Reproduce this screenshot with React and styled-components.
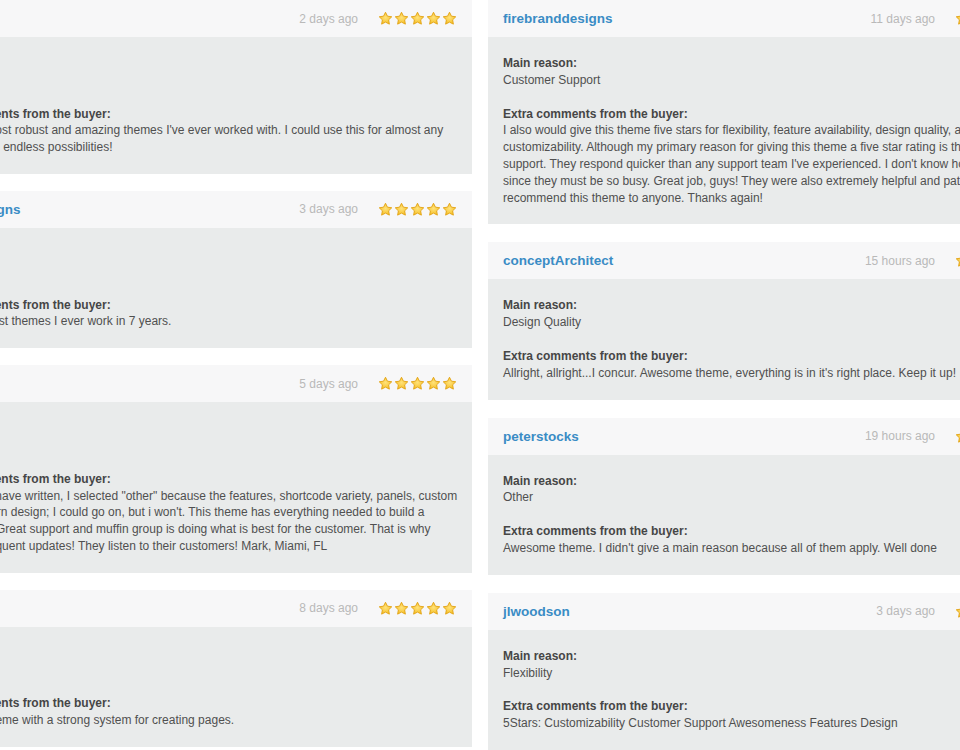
import React from "react";
import styled, { createGlobalStyle } from "styled-components";

const GlobalStyle = createGlobalStyle`
  html, body {
    margin: 0;
    padding: 0;
    background: #ffffff;
    overflow: hidden;
  }
  body {
    font-family: "Liberation Sans", Arial, sans-serif;
  }
`;

const Board = styled.div`
  display: flex;
  align-items: flex-start;
  gap: 16px;
  margin-left: -89px;
  width: 1138px;
`;

const Column = styled.div`
  display: flex;
  flex-direction: column;
  gap: ${(p) => p.$gap}px;
  width: 561px;
  flex: none;
`;

const Card = styled.div`
  display: flex;
  flex-direction: column;
`;

const CardHeader = styled.div`
  display: flex;
  align-items: center;
  height: 37px;
  padding: 0 15px 0 15px;
  background: #f7f7f8;
`;

const Username = styled.a`
  flex: 1;
  font-size: 13.5px;
  font-weight: bold;
  color: #3a8cc5;
  text-decoration: none;
  white-space: nowrap;
`;

const PostedAt = styled.span`
  font-size: 12px;
  color: #b9b9b9;
  margin-right: 20px;
  white-space: nowrap;
`;

const Stars = styled.div`
  display: flex;
  gap: 1px;
`;

const CardBody = styled.div`
  padding: 18px 15px 18px;
  background: #e9ebeb;
  font-size: 12px;
  line-height: 16.8px;
  color: #505050;
`;

const Section = styled.div`
  & + & {
    margin-top: 17px;
  }
`;

const Label = styled.div`
  font-weight: bold;
  color: #464646;
`;

const Line = styled.div`
  white-space: nowrap;
`;

const Star = () => (
  <svg width="15" height="15" viewBox="0 0 24 24">
    <defs>
      <radialGradient id="starFill" cx="50%" cy="45%" r="60%">
        <stop offset="0%" stopColor="#ffe27a" />
        <stop offset="100%" stopColor="#f5bd1f" />
      </radialGradient>
    </defs>
    <path
      d="M12 2l3.09 6.26L22 9.27l-5 4.87 1.18 6.88L12 17.77l-6.18 3.25L7 14.14 2 9.27l6.91-1.01L12 2z"
      fill="url(#starFill)"
      stroke="#e2a316"
      strokeWidth="1.5"
      strokeLinejoin="round"
    />
  </svg>
);

const leftReviews = [
  {
    user: "kdinko",
    when: "2 days ago",
    reason: "Flexibility",
    comment: [
      "One of the most robust and amazing themes I've ever worked with. I could use this for almost any",
      "agency. It has endless possibilities!",
    ],
  },
  {
    user: "kreativdesigns",
    when: "3 days ago",
    reason: "Features",
    comment: ["One of the best themes I ever work in 7 years."],
  },
  {
    user: "markmia",
    when: "5 days ago",
    reason: "Other",
    comment: [
      'As all others have written, I selected "other" because the features, shortcode variety, panels, custom',
      "fonts & modern design; I could go on, but i won't. This theme has everything needed to build a",
      "fine website. Great support and muffin group is doing what is best for the customer. That is why",
      "they have frequent updates! They listen to their customers! Mark, Miami, FL",
    ],
  },
  {
    user: "ozzy",
    when: "8 days ago",
    reason: "Flexibility",
    comment: ["A powerful theme with a strong system for creating pages."],
  },
];

const rightReviews = [
  {
    user: "firebranddesigns",
    when: "11 days ago",
    reason: "Customer Support",
    comment: [
      "I also would give this theme five stars for flexibility, feature availability, design quality, and",
      "customizability. Although my primary reason for giving this theme a five star rating is the",
      "support. They respond quicker than any support team I've experienced. I don't know how",
      "since they must be so busy. Great job, guys! They were also extremely helpful and patient.",
      "recommend this theme to anyone. Thanks again!",
    ],
  },
  {
    user: "conceptArchitect",
    when: "15 hours ago",
    reason: "Design Quality",
    comment: [
      "Allright, allright...I concur. Awesome theme, everything is in it's right place. Keep it up!",
    ],
  },
  {
    user: "peterstocks",
    when: "19 hours ago",
    reason: "Other",
    comment: [
      "Awesome theme. I didn't give a main reason because all of them apply. Well done",
    ],
  },
  {
    user: "jlwoodson",
    when: "3 days ago",
    reason: "Flexibility",
    comment: [
      "5Stars: Customizability Customer Support Awesomeness Features Design",
    ],
  },
];

const Review = ({ review }) => (
  <Card>
    <CardHeader>
      <Username href="#">{review.user}</Username>
      <PostedAt>{review.when}</PostedAt>
      <Stars>
        {[0, 1, 2, 3, 4].map((i) => (
          <Star key={i} />
        ))}
      </Stars>
    </CardHeader>
    <CardBody>
      <Section>
        <Label>Main reason:</Label>
        <Line>{review.reason}</Line>
      </Section>
      <Section>
        <Label>Extra comments from the buyer:</Label>
        {review.comment.map((line, i) => (
          <Line key={i}>{line}</Line>
        ))}
      </Section>
    </CardBody>
  </Card>
);

const App = () => (
  <>
    <GlobalStyle />
    <Board>
      <Column $gap={17}>
        {leftReviews.map((r) => (
          <Review key={r.user} review={r} />
        ))}
      </Column>
      <Column $gap={18}>
        {rightReviews.map((r) => (
          <Review key={r.user} review={r} />
        ))}
      </Column>
    </Board>
  </>
);

export default App;
